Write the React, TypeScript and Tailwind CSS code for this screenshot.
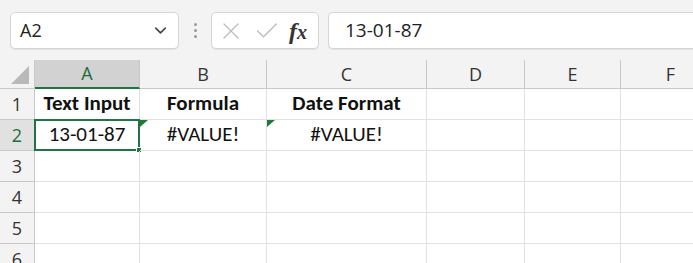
import { ChevronDown, X, Check } from 'lucide-react'

const cols = [
  { label: 'A', width: 'w-[105px]' },
  { label: 'B', width: 'w-[127px]' },
  { label: 'C', width: 'w-[160px]' },
  { label: 'D', width: 'w-[98px]' },
  { label: 'E', width: 'w-[96px]' },
  { label: 'F', width: 'w-[100px]' },
]

const rows: string[][] = [
  ['Text Input', 'Formula', 'Date Format', '', '', ''],
  ['13-01-87', '#VALUE!', '#VALUE!', '', '', ''],
  ['', '', '', '', '', ''],
  ['', '', '', '', '', ''],
  ['', '', '', '', '', ''],
  ['', '', '', '', '', ''],
]

const uiFont = "font-['Open_Sans','Noto_Sans',sans-serif]"
const cellFont = "font-['Carlito','Lato','Liberation_Sans',sans-serif]"

function ErrorFlag() {
  return (
    <svg className="absolute left-0 top-0" width="8" height="7" viewBox="0 0 8 7">
      <polygon points="0,0 8,0 0,7" fill="#1e7a3c" />
    </svg>
  )
}

export default function App() {
  return (
    <div className="h-[263px] w-[693px] overflow-hidden bg-[#f3f3f3]">
      {/* Name box + formula bar */}
      <div className={`flex h-[60px] items-start pt-[12px] pl-[10px] ${uiFont}`}>
        <div className="flex h-[37px] w-[169px] items-center justify-between rounded-[5px] border border-[#d6d6d6] bg-white pl-[9px] pr-[8px] shadow-[0_1px_0_#e2e2e2]">
          <span className="text-[18px] text-[#222]">A2</span>
          <ChevronDown className="h-[19px] w-[19px] text-[#444]" strokeWidth={2} />
        </div>
        <div className="flex h-[37px] w-[32px] flex-col items-center justify-center gap-[3px]">
          <span className="h-[3px] w-[3px] rounded-full bg-[#999]" />
          <span className="h-[3px] w-[3px] rounded-full bg-[#999]" />
          <span className="h-[3px] w-[3px] rounded-full bg-[#999]" />
        </div>
        <div className="flex h-[37px] w-[108px] items-center gap-[8px] rounded-[5px] border border-[#d6d6d6] bg-white pl-[5px] shadow-[0_1px_0_#e2e2e2]">
          <X className="h-[28px] w-[28px] text-[#bdbdbd]" strokeWidth={1.2} />
          <Check className="h-[28px] w-[28px] text-[#bdbdbd]" strokeWidth={1.2} />
          <span className="font-['Liberation_Serif',serif] text-[24px] font-bold italic leading-none text-[#333]">
            f<span className="text-[20px]">x</span>
          </span>
        </div>
        <div className="ml-[9px] flex h-[37px] flex-1 items-center rounded-l-[5px] border border-r-0 border-[#d6d6d6] bg-white pl-[16px] shadow-[0_1px_0_#e2e2e2]">
          <span className="text-[19px] text-[#222]">13-01-87</span>
        </div>
      </div>

      {/* Grid */}
      <div className="bg-white">
        <div className={`flex h-[29px] bg-[#f3f3f3] ${uiFont}`}>
          <div className="relative w-[35px] shrink-0 border-b border-r border-[#c8c8c8]">
            <svg className="absolute bottom-[4px] right-[5px]" width="18" height="18" viewBox="0 0 18 18">
              <polygon points="18,0 18,18 0,18" fill="#b9b9b9" />
            </svg>
          </div>
          {cols.map((c) => (
            <div
              key={c.label}
              className={`flex shrink-0 items-center justify-center text-[18px] ${c.width} ${
                c.label === 'A'
                  ? 'border-b-2 border-r border-b-[#217346] border-r-[#c8c8c8] bg-[#d2d2d2] text-[#1d6b3a]'
                  : 'border-b border-r border-[#c8c8c8] text-[#333]'
              }`}
            >
              {c.label}
            </div>
          ))}
        </div>

        {rows.map((r, ri) => (
          <div key={ri} className="flex h-[31px]">
            <div
              className={`flex w-[35px] shrink-0 items-center justify-center border-b border-r border-[#c8c8c8] text-[18px] ${uiFont} ${
                ri === 1 ? 'bg-[#e1e1e1] text-[#1d6b3a]' : 'bg-[#f3f3f3] text-[#333]'
              }`}
            >
              {ri + 1}
            </div>
            {r.map((v, ci) => (
              <div
                key={ci}
                className={`relative flex shrink-0 items-center justify-center border-b border-r border-[#e1e1e1] text-[21px] text-[#111] ${cellFont} ${
                  cols[ci].width
                } ${ri === 0 ? 'font-bold' : ''}`}
              >
                {ri === 1 && (ci === 1 || ci === 2) && <ErrorFlag />}
                {v}
                {ri === 1 && ci === 0 && (
                  <div className="absolute -left-[1px] -top-[1px] h-[32px] w-[106px] border-2 border-[#217346]">
                    <div className="absolute -bottom-[4px] -right-[4px] h-[6px] w-[6px] border border-white bg-[#217346]" />
                  </div>
                )}
              </div>
            ))}
          </div>
        ))}
      </div>
    </div>
  )
}
